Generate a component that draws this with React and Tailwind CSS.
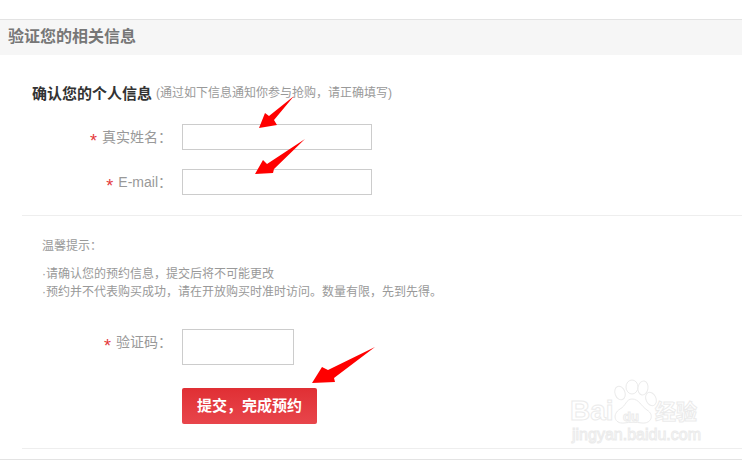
import React from 'react'

const fontStack = { fontFamily: '"Liberation Sans", "Noto Sans CJK SC", sans-serif' }

const Field = ({ label, inputClass }) => (
  <div className="flex items-start">
    <label className="w-[172px] shrink-0 text-right text-[14px] leading-[26px] text-[#999]">
      <span className="inline-block mr-[5px] text-[18px] leading-none align-[-5px] text-[#e4393c]">*</span>{label}：
    </label>
    <input type="text" className={`ml-[10px] border border-[#ccc] bg-white ${inputClass}`} />
  </div>
)

const markText = 'absolute whitespace-nowrap leading-none font-bold text-white [-webkit-text-stroke:1px_#ebebeb]'

const App = () => {
  return (
    <div className="relative w-[742px] h-[461px] overflow-hidden bg-white" style={fontStack}>
      <div className="pt-[19px]">
        <div className="h-[36px] border-t border-[#e3e3e3] bg-[#f6f6f6] pl-[8px] text-[16px] leading-[34px] font-bold text-[#777]">
          验证您的相关信息
        </div>

        <div className="pl-[32px] pt-[25px] h-[31px] flex items-center mt-[10px]">
          <span className="text-[15px] font-bold text-[#333] leading-none">确认您的个人信息</span>
          <span className="ml-1 text-[12px] text-[#999] leading-none">(通过如下信息通知你参与抢购，请正确填写)</span>
        </div>

        <div className="mt-[28px] flex flex-col gap-[19px]">
          <Field label="真实姓名" inputClass="w-[190px] h-[26px]" />
          <Field label="E-mail" inputClass="w-[190px] h-[26px]" />
        </div>

        <div className="ml-[22px] mt-[20px] border-t border-[#eee] pl-[20px] pt-[21px] text-[12px] text-[#999]">
          <p className="leading-[18px]">温馨提示：</p>
          <p className="mt-[10px] leading-[18px]">·请确认您的预约信息，提交后将不可能更改</p>
          <p className="leading-[18px]">·预约并不代表购买成功，请在开放购买时准时访问。数量有限，先到先得。</p>
        </div>

        <div className="mt-[28px]">
          <Field label="验证码" inputClass="w-[112px] h-[36px]" />
        </div>

        <div className="pl-[182px] mt-[23px]">
          <button className="w-[135px] h-[36px] rounded-[2px] bg-gradient-to-b from-[#e02f34] to-[#e8454b] text-[15px] font-bold text-white">
            提交，完成预约
          </button>
        </div>

        <div className="ml-[22px] mt-[24px] border-t border-[#eee]" />
        <div className="mt-[10px] border-t border-[#e3e3e3]" />
      </div>

      {/* red arrows */}
      <svg className="absolute left-0 top-0 pointer-events-none" width="742" height="461" viewBox="0 0 742 461" fill="#ff0000">
        <polygon points="259,128 265,113 269,116 294,96 274,120 277,125" />
        <polygon points="255,174 263,160 267,164 305,139 274,169 273,173" />
        <polygon points="312,383 322,367 328,370 375,347 334,378 335,382" />
      </svg>

      {/* watermark */}
      <div className="absolute left-[560px] top-[375px] w-[150px] h-[75px] select-none">
        <span className={`${markText} left-[10px] top-[22px] text-[28px]`}>Bai</span>
        <svg className="absolute left-[52px] top-[4px]" width="50" height="50" viewBox="0 0 50 50" fill="white" stroke="#ebebeb" strokeWidth="1">
          <ellipse cx="8" cy="14" rx="5" ry="7" transform="rotate(-20 8 14)" />
          <ellipse cx="20" cy="8" rx="6" ry="7" />
          <ellipse cx="31" cy="9" rx="5" ry="7" transform="rotate(10 31 9)" />
          <ellipse cx="39" cy="20" rx="5" ry="7" transform="rotate(-25 39 20)" />
          <path d="M20 20 C27 20 29 27 35 31 C43 36 39 45 30 44 C24 43 18 43 12 44 C2 45 0 35 8 30 C14 27 14 20 20 20 Z" />
        </svg>
        <span className={`${markText} left-[63px] top-[35px] text-[13px]`}>du</span>
        <span className={`${markText} left-[95px] top-[26px] text-[21px]`}>经验</span>
        <span className={`${markText} left-[12px] top-[52px] text-[16px] !font-normal`}>jingyan.baidu.com</span>
      </div>
    </div>
  )
}

export default App
